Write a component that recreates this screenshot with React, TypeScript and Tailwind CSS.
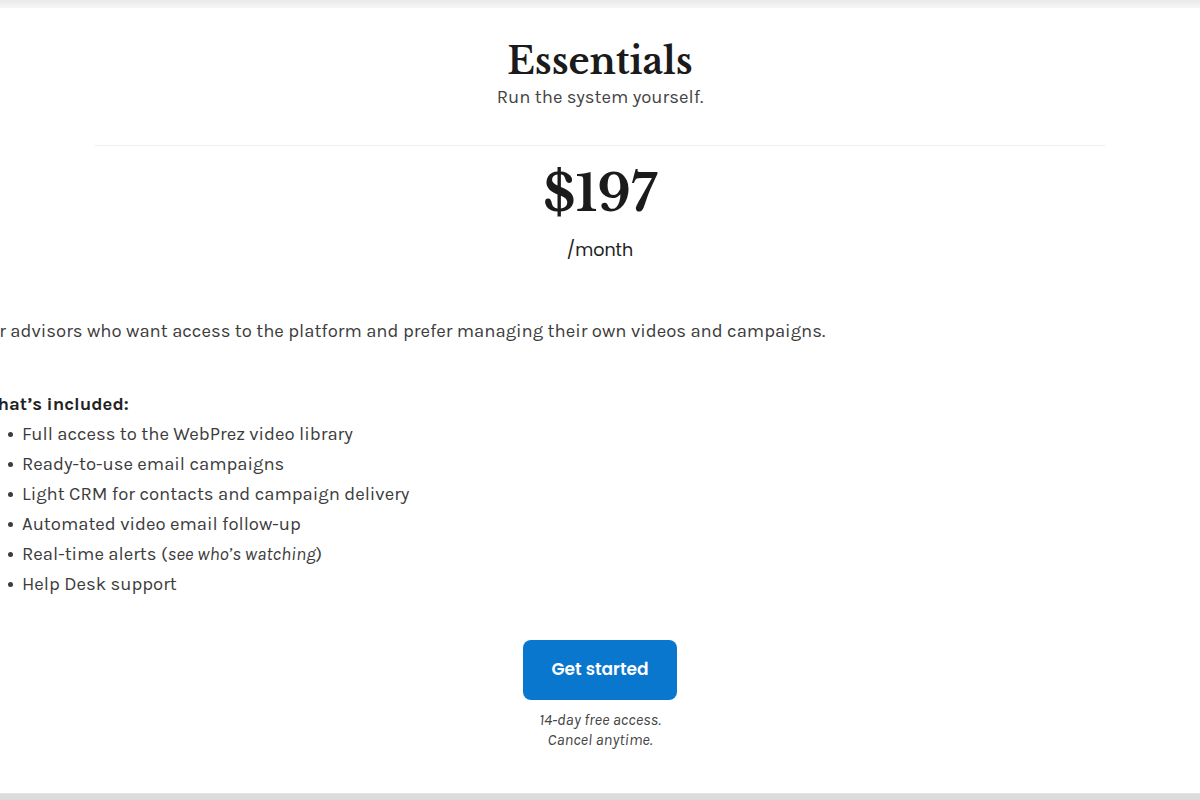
const features = [
  { text: 'Full access to the WebPrez video library' },
  { text: 'Ready-to-use email campaigns' },
  { text: 'Light CRM for contacts and campaign delivery' },
  { text: 'Automated video email follow-up' },
  { text: 'Real-time alerts (', em: 'see who’s watching', tail: ')' },
  { text: 'Help Desk support' },
];

const serif = "font-['Libre_Baskerville','DejaVu_Serif',serif]";
const sans = "font-['Karla','Open_Sans','Liberation_Sans',sans-serif]";

export default function App() {
  return (
    <div className="flex h-[800px] w-[1200px] flex-col overflow-hidden bg-white">
      <div className="h-[8px] shrink-0 bg-gradient-to-b from-[#e9e9e9] to-[#f6f6f6]" />
      <main className="-ml-[20px] flex w-[1240px] flex-1 flex-col">
        <header className="flex flex-col items-center pt-[33px]">
          <h2 className={`${serif} text-[36px] font-bold leading-[42px] text-[#1b1b1b]`}>
            Essentials
          </h2>
          <p className={`${sans} mt-[1px] text-[18.5px] leading-[26px] text-[#444]`}>
            Run the system yourself.
          </p>
        </header>

        <div className="mx-[115px] mt-[35px] border-t border-[#eeeeee]" />

        <section className="flex flex-col items-center pt-[16px]">
          <div className={`${serif} text-[50px] font-bold leading-[64px] text-[#1b1b1b]`}>$197</div>
          <div className="mt-[12px] font-['Poppins','Inter',sans-serif] text-[17.5px] font-normal leading-[24px] text-[#222]">
            /month
          </div>
        </section>

        <p className={`${sans} mt-[56px] text-[18.5px] leading-[26px] text-[#3c3c3c]`}>
          For advisors who want access to the platform and prefer managing their own videos and
          campaigns.
        </p>

        <div className={`${sans} mt-[47px] text-[18.5px] text-[#3c3c3c]`}>
          <h4 className="font-bold leading-[26px] text-[#222]">What’s included:</h4>
          <ul className="mt-[4px] flex flex-col gap-[4px] pl-[28px]">
            {features.map((f) => (
              <li key={f.text} className="flex items-center gap-[9px] leading-[26px]">
                <span className="h-[5px] w-[5px] shrink-0 rounded-full bg-[#3c3c3c]" />
                <span>
                  {f.text}
                  {f.em && <em>{f.em}</em>}
                  {f.tail}
                </span>
              </li>
            ))}
          </ul>
        </div>

        <div className="mt-[43px] flex flex-col items-center">
          <button className="h-[60px] w-[154px] rounded-[8px] bg-[#0a77cf] font-['Poppins','Inter',sans-serif] text-[17px] font-semibold text-white">
            Get started
          </button>
          <p className={`${sans} mt-[10px] text-center text-[16px] italic leading-[20px] text-[#444]`}>
            14-day free access.
            <br />
            Cancel anytime.
          </p>
        </div>
      </main>
      <div className="h-[7px] shrink-0 border-t border-[#e4e4e4] bg-[#dcdcdc]" />
    </div>
  );
}
